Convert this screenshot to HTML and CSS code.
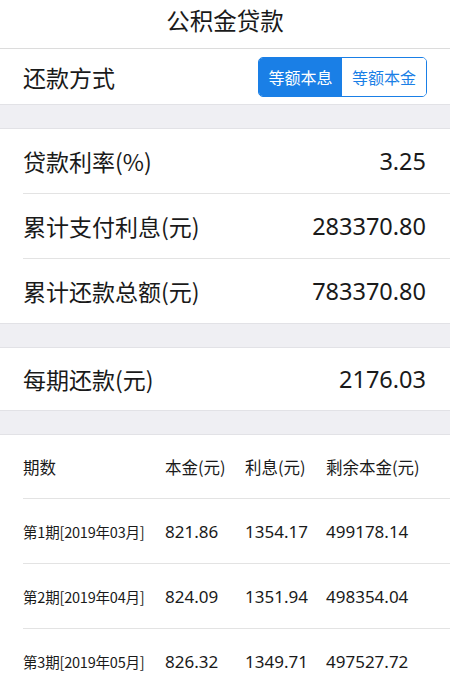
FILE: index.html
```html
<!DOCTYPE html>
<html lang="zh">
<head>
<meta charset="utf-8">
<link rel="stylesheet" href="styles.css">
</head>
<body>
<div class="page">
  <header class="top">公积金贷款</header>
  <section class="group">
    <div class="row method">
      <span class="label">还款方式</span>
      <div class="seg">
        <span class="seg-item active">等额本息</span>
        <span class="seg-item">等额本金</span>
      </div>
    </div>
  </section>
  <div class="gap"></div>
  <section class="group">
    <div class="row"><span class="label">贷款利率(%)</span><span class="value">3.25</span></div>
    <div class="row"><span class="label">累计支付利息(元)</span><span class="value">283370.80</span></div>
    <div class="row"><span class="label">累计还款总额(元)</span><span class="value">783370.80</span></div>
  </section>
  <div class="gap"></div>
  <section class="group">
    <div class="row single"><span class="label">每期还款(元)</span><span class="value">2176.03</span></div>
  </section>
  <div class="gap"></div>
  <section class="group table">
    <div class="trow thead">
      <span>期数</span><span>本金(元)</span><span>利息(元)</span><span>剩余本金(元)</span>
    </div>
    <div class="trow">
      <span class="period">第1期[2019年03月]</span><span>821.86</span><span>1354.17</span><span>499178.14</span>
    </div>
    <div class="trow">
      <span class="period">第2期[2019年04月]</span><span>824.09</span><span>1351.94</span><span>498354.04</span>
    </div>
    <div class="trow">
      <span class="period">第3期[2019年05月]</span><span>826.32</span><span>1349.71</span><span>497527.72</span>
    </div>
  </section>
</div>
</body>
</html>
```

FILE: styles.css
```css
html, body {
  margin: 0;
  padding: 0;
  background: #ffffff;
}
body {
  font-family: "Noto Sans CJK SC", "Noto Sans", sans-serif;
  color: #1a1a1a;
  overflow: hidden;
}
.page {
  width: 450px;
}
.top {
  height: 48px;
  line-height: 40px;
  text-align: center;
  font-size: 23.5px;
  border-bottom: 1px solid #dcdcdc;
}
.group {
  background: #fff;
}
.gap {
  height: 23px;
  background: #efeff3;
  border-top: 1px solid #e2e2e6;
  border-bottom: 1px solid #e2e2e6;
}
.row {
  display: flex;
  align-items: center;
  justify-content: space-between;
  height: 64px;
  margin-left: 23px;
  padding-right: 24px;
  border-bottom: 1px solid #e3e3e3;
  font-size: 23px;
}
.row:last-child {
  border-bottom: none;
}
.method {
  height: 55px;
}
.single {
  height: 62px;
}
.value {
  font-family: "Noto Sans", sans-serif;
  font-size: 23.5px;
}
.seg {
  display: flex;
  height: 38px;
  border: 1px solid #1a7fe6;
  border-radius: 5px;
  overflow: hidden;
  margin-right: -1px;
}
.seg-item {
  display: flex;
  align-items: center;
  justify-content: center;
  font-size: 16px;
  color: #1a7fe6;
  background: #fff;
}
.seg-item:first-child {
  width: 83px;
}
.seg-item:last-child {
  width: 84px;
}
.seg-item.active {
  background: #1a7fe6;
  color: #fff;
}
.trow {
  display: grid;
  grid-template-columns: 142px 80px 81px 1fr;
  align-items: center;
  height: 64px;
  margin-left: 23px;
  border-bottom: 1px solid #e3e3e3;
  font-size: 17px;
  font-family: "Noto Sans", "Noto Sans CJK SC", sans-serif;
}
.thead {
  height: 63px;
  font-size: 16.5px;
  font-family: "Noto Sans CJK SC", sans-serif;
}
.trow .period {
  font-size: 14.5px;
  font-family: "Noto Sans CJK SC", sans-serif;
  letter-spacing: -0.2px;
}
```
